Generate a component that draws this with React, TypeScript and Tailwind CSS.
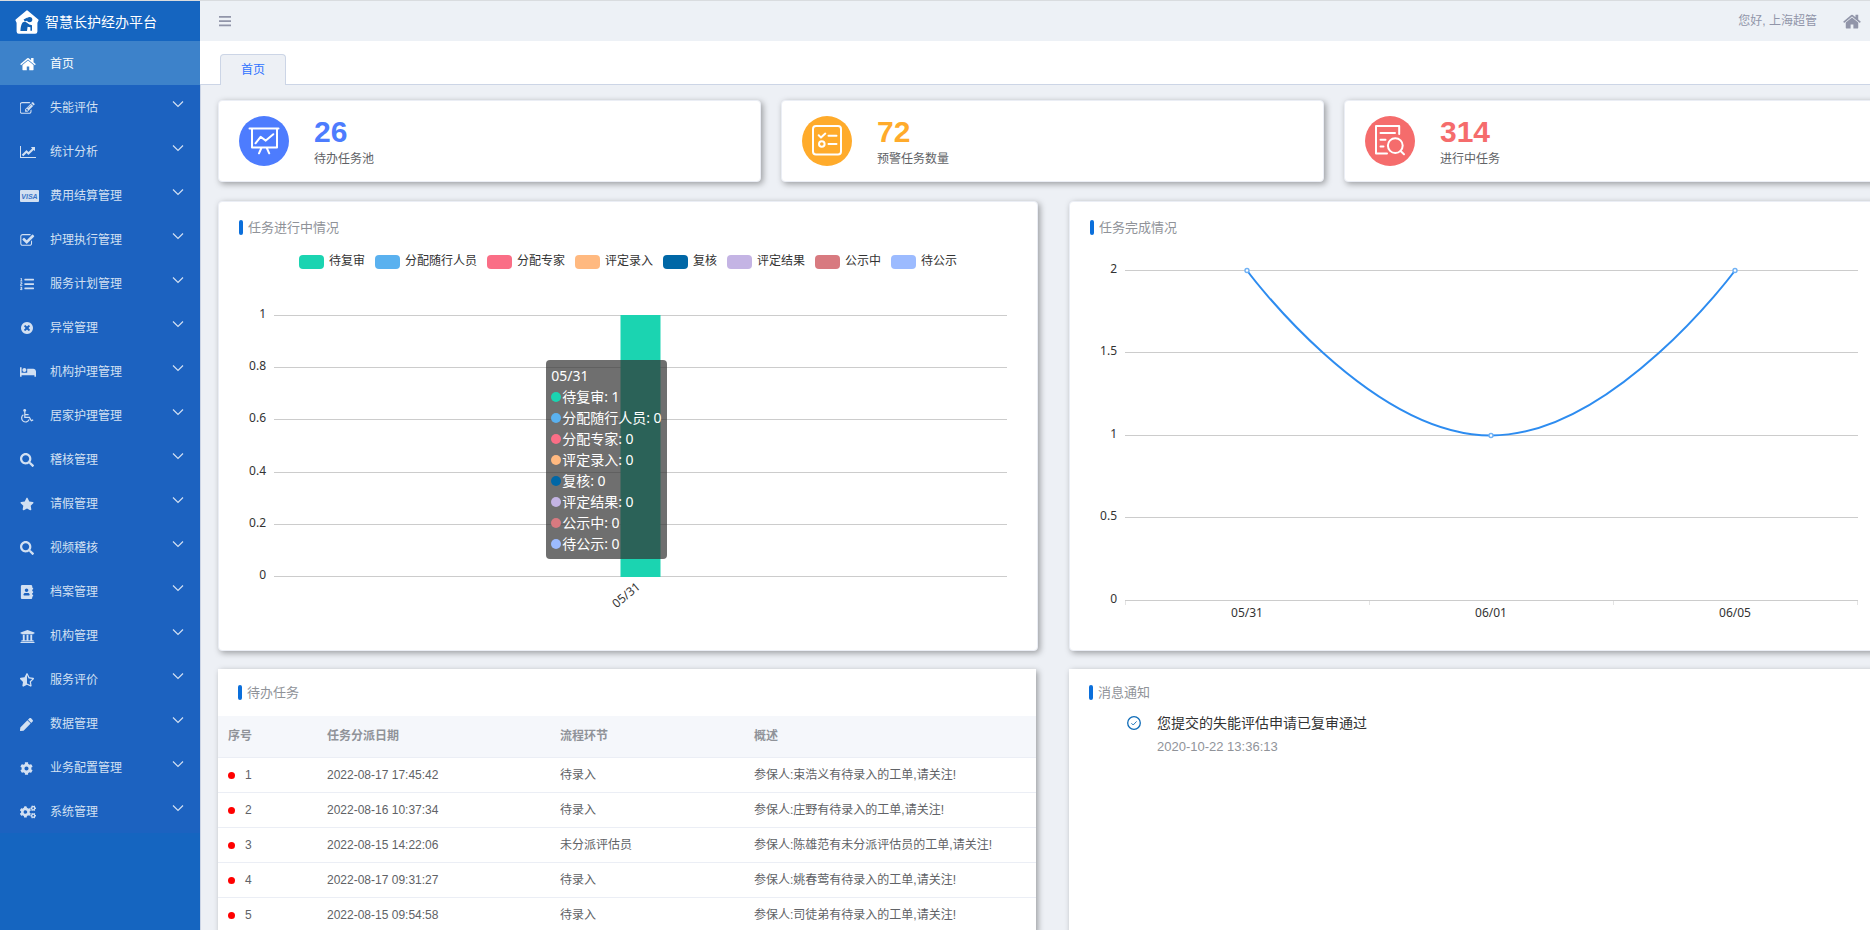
import React from 'react';
import {
  FaAddressBook,
  FaBed,
  FaCog,
  FaCogs,
  FaListOl,
  FaPen,
  FaSearch,
  FaStar,
  FaStarHalfAlt,
  FaUniversity,
} from 'react-icons/fa';

const HomeIcon = ({ className }: { className?: string }) => (
  <svg viewBox="64 200 1664 1370" className={className} fill="currentColor" aria-hidden="true">
    <path d="M1472 992v480q0 26-19 45t-45 19h-384v-384h-256v384h-384q-26 0-45-19t-19-45v-480q0-1 .5-3t.5-3l575-474 575 474q1 2 1 6zm223-69l-62 74q-8 9-21 11h-3q-13 0-21-7l-692-577-692 577q-12 8-24 7-13-2-21-11l-62-74q-8-10-7-23.5t11-21.5l719-599q32-26 76-26t76 26l244 204v-195q0-14 9-23t23-9h192q14 0 23 9t9 23v408l219 182q10 8 11 21.5t-7 23.5z" />
  </svg>
);

const EditIcon = () => (
  <svg viewBox="64 0 1728 1792" className="h-[15px] w-[15px]" fill="currentColor" aria-hidden="true">
    <path d="M888 1184l116-116-152-152-116 116v56h96v96h56zm440-720q-16-16-33 1l-350 350q-17 17-1 33t33-1l350-350q17-17 1-33zm80 594v190q0 119-84.5 203.5t-203.5 84.5h-832q-119 0-203.5-84.5t-84.5-203.5v-832q0-119 84.5-203.5t203.5-84.5h832q63 0 117 25 15 7 18 23 3 17-9 29l-49 49q-14 14-32 8-23-6-45-6h-832q-66 0-113 47t-47 113v832q0 66 47 113t113 47h832q66 0 113-47t47-113v-126q0-13 9-22l64-64q15-15 35-7t20 29zm-96-738l288 288-672 672h-288v-288zm444 132l-92 92-288-288 92-92q28-28 68-28t68 28l152 152q28 28 28 68t-28 68z" />
  </svg>
);

const LineChartIcon = () => (
  <svg viewBox="0 0 2048 1792" className="h-[14px] w-[16px]" fill="currentColor" aria-hidden="true">
    <path d="M2048 1536v128h-2048v-1536h128v1408h1920zm-128-1248v435q0 21-19.5 29.5t-35.5-7.5l-121-121-633 633q-10 10-23 10t-23-10l-233-233-416 416-192-192 585-585q10-10 23-10t23 10l233 233 464-464-121-121q-16-16-7.5-35.5t29.5-19.5h435q14 0 23 9t9 23z" />
  </svg>
);

const VisaIcon = () => (
  <svg viewBox="0 0 19 12" className="h-3 w-[19px]" aria-hidden="true">
    <rect width="19" height="12" rx="1" fill="currentColor" />
    <text x="9.5" y="8.6" textAnchor="middle" fontSize="7" fontStyle="italic" fontWeight="bold" fill="#3a74c6">
      VISA
    </text>
  </svg>
);

const CheckSquareIcon = () => (
  <svg viewBox="64 0 1728 1792" className="h-[15px] w-[15px]" fill="currentColor" aria-hidden="true">
    <path d="M1472 930v318q0 119-84.5 203.5t-203.5 84.5h-832q-119 0-203.5-84.5t-84.5-203.5v-832q0-119 84.5-203.5t203.5-84.5h832q63 0 117 25 15 7 18 23 3 17-9 29l-49 49q-10 10-23 10-3 0-9-2-23-6-45-6h-832q-66 0-113 47t-47 113v832q0 66 47 113t113 47h832q66 0 113-47t47-113v-254q0-13 9-22l64-64q10-10 23-10 6 0 12 3 20 8 20 29zm231-489l-814 814q-24 24-57 24t-57-24l-430-430q-24-24-24-57t24-57l110-110q24-24 57-24t57 24l263 263 647-647q24-24 57-24t57 24l110 110q24 24 24 57t-24 57z" />
  </svg>
);

const TimesCircleIcon = () => (
  <svg viewBox="0 0 1792 1792" className="h-[14px] w-[14px]" fill="currentColor" aria-hidden="true">
    <path d="M1277 1122q0-26-19-45l-181-181 181-181q19-19 19-45 0-27-19-46l-90-90q-19-19-46-19-26 0-45 19l-181 181-181-181q-19-19-45-19-27 0-46 19l-90 90q-19 19-19 46 0 26 19 45l181 181-181 181q-19 19-19 45 0 27 19 46l90 90q19 19 46 19 26 0 45-19l181-181 181 181q19 19 45 19 27 0 46-19l90-90q19-19 19-46zm387-226q0 209-103 385.5t-279.5 279.5-385.5 103-385.5-103-279.5-279.5-103-385.5 103-385.5 279.5-279.5 385.5-103 385.5 103 279.5 279.5 103 385.5z" />
  </svg>
);

const WheelchairIcon = () => (
  <svg viewBox="0 0 14 14" className="h-[14px] w-[14px]" fill="none" stroke="currentColor" strokeWidth="1.2" aria-hidden="true">
    <circle cx="4.7" cy="1.5" r="1.4" fill="currentColor" stroke="none" />
    <path d="M4.8 2.8V8.4H9.4L11.3 11.8 13.2 10.9M4.8 5.6H8.6" />
    <path d="M3.4 5.8A3.9 3.9 0 1 0 9.2 10.4" />
  </svg>
);

const Logo = () => (
  <svg viewBox="0 0 24 24" className="h-6 w-6 shrink-0" aria-hidden="true">
    <path
      d="M12 1.2 22.8 10.2 21.6 12.6V21.6Q21.6 23 20.2 23H3.8Q2.4 23 2.4 21.6V12.6L1.2 10.2Z"
      fill="#fff"
      stroke="#fff"
      strokeWidth="1.6"
      strokeLinejoin="round"
    />
    <circle cx="14.6" cy="9.6" r="2.7" fill="#1060b4" />
    <path d="M12.4 7.6 8.6 9.4 9.8 11.6 12.6 10.6Z" fill="#1060b4" />
    <path d="M7.6 12.4Q9.6 11 11.6 12.4L14.4 14.6 17 15.2V20.8H15.4V17.2L12.6 16.8 12 21H5.4Q5.6 15 7.6 12.4Z" fill="#1060b4" />
  </svg>
);

const menu = [
  { label: '失能评估', icon: <EditIcon /> },
  { label: '统计分析', icon: <LineChartIcon /> },
  { label: '费用结算管理', icon: <VisaIcon /> },
  { label: '护理执行管理', icon: <CheckSquareIcon /> },
  { label: '服务计划管理', icon: <FaListOl size={14} /> },
  { label: '异常管理', icon: <TimesCircleIcon /> },
  { label: '机构护理管理', icon: <FaBed size={16} /> },
  { label: '居家护理管理', icon: <WheelchairIcon /> },
  { label: '稽核管理', icon: <FaSearch size={14} /> },
  { label: '请假管理', icon: <FaStar size={14} /> },
  { label: '视频稽核', icon: <FaSearch size={14} /> },
  { label: '档案管理', icon: <FaAddressBook size={14} /> },
  { label: '机构管理', icon: <FaUniversity size={15} /> },
  { label: '服务评价', icon: <FaStarHalfAlt size={14} /> },
  { label: '数据管理', icon: <FaPen size={13} /> },
  { label: '业务配置管理', icon: <FaCog size={13} /> },
  { label: '系统管理', icon: <FaCogs size={16} /> },
];

const series = [
  { name: '待复审', value: 1, color: 'bg-[#1bd4b1]' },
  { name: '分配随行人员', value: 0, color: 'bg-[#5ab1ef]' },
  { name: '分配专家', value: 0, color: 'bg-[#fa6e86]' },
  { name: '评定录入', value: 0, color: 'bg-[#ffb980]' },
  { name: '复核', value: 0, color: 'bg-[#0067a6]' },
  { name: '评定结果', value: 0, color: 'bg-[#c4b4e4]' },
  { name: '公示中', value: 0, color: 'bg-[#d87a80]' },
  { name: '待公示', value: 0, color: 'bg-[#9cbbff]' },
];

const tasks = [
  { id: 1, date: '2022-08-17 17:45:42', step: '待录入', note: '参保人:束浩义有待录入的工单,请关注!' },
  { id: 2, date: '2022-08-16 10:37:34', step: '待录入', note: '参保人:庄野有待录入的工单,请关注!' },
  { id: 3, date: '2022-08-15 14:22:06', step: '未分派评估员', note: '参保人:陈雄范有未分派评估员的工单,请关注!' },
  { id: 4, date: '2022-08-17 09:31:27', step: '待录入', note: '参保人:姚春莺有待录入的工单,请关注!' },
  { id: 5, date: '2022-08-15 09:54:58', step: '待录入', note: '参保人:司徒弟有待录入的工单,请关注!' },
];

interface StatCardProps {
  value: number;
  label: string;
  bg: string;
  color: string;
  children: React.ReactNode;
}

const StatCard: React.FC<StatCardProps> = ({ value, label, bg, color, children }) => (
  <div className="flex h-[82px] items-center gap-[25px] rounded border border-[#ebeef5] bg-white px-5 shadow-[2px_2px_6px_rgba(0,0,0,0.35)]">
    <div className={`h-[50px] w-[50px] shrink-0 rounded-full ${bg}`}>
      <svg
        viewBox="0 0 50 50"
        fill="none"
        stroke="#fff"
        strokeWidth="2"
        strokeLinecap="round"
        strokeLinejoin="round"
        aria-hidden="true"
      >
        {children}
      </svg>
    </div>
    <div className="pt-1">
      <p className={`text-[30px] leading-8 font-bold ${color}`}>{value}</p>
      <p className="text-xs leading-[22px] text-[#606266]">{label}</p>
    </div>
  </div>
);

const PanelTitle = ({ children }: { children: React.ReactNode }) => (
  <div className="flex h-[47px] items-center gap-[5px] px-5">
    <span className="h-[15px] w-1 rounded-sm bg-[#0b6fdb]" />
    <h2 className="text-[13px] leading-5 text-[#909399]">{children}</h2>
  </div>
);

const chartFont = "font-['Noto_Sans','Noto_Sans_CJK_SC',sans-serif]";

const barGrid = [
  { label: '1', y: 43 },
  { label: '0.8', y: 95 },
  { label: '0.6', y: 147 },
  { label: '0.4', y: 200 },
  { label: '0.2', y: 252 },
  { label: '0', y: 304 },
];

const BarChart = () => (
  <div className={`relative ${chartFont}`}>
    <ul className="flex h-5 flex-wrap items-center justify-center gap-[10px]">
      {series.map((s) => (
        <li key={s.name} className="flex items-center gap-[5px] text-xs text-[#333]">
          <span className={`h-[14px] w-[25px] rounded ${s.color}`} />
          <span className="pb-0.5 leading-[18px]">{s.name}</span>
        </li>
      ))}
    </ul>
    <svg viewBox="0 0 818 378" className="block w-full" role="img" aria-label="任务进行中情况">
      {barGrid.map((g) => (
        <g key={g.label}>
          <rect x="55" y={g.y} width="733" height="1" fill="#ccc" shapeRendering="crispEdges" />
          <text x="47" y={g.y + 3} textAnchor="end" fontSize="12" fill="#333">
            {g.label}
          </text>
        </g>
      ))}
      <rect x="401.5" y="43" width="40" height="262" fill="#1bd4b1" />
      <text x="422" y="316" textAnchor="end" fontSize="12" fill="#333" transform="rotate(-40 422 316)">
        05/31
      </text>
    </svg>
    <div className="absolute top-[108px] left-[40%] rounded bg-[#323232]/70 p-[5px] text-sm leading-[21px] whitespace-nowrap text-white">
      <p>05/31</p>
      {series.map((s) => (
        <p key={s.name} className="flex items-center gap-px">
          <span className={`h-[10px] w-[10px] rounded-full ${s.color}`} />
          {s.name}: {s.value}
        </p>
      ))}
    </div>
  </div>
);

const lineGrid = [
  { label: '2', y: 18 },
  { label: '1.5', y: 100 },
  { label: '1', y: 183 },
  { label: '0.5', y: 265 },
  { label: '0', y: 348 },
];

const linePoints = [
  { label: '05/31', x: 177, y: 18.5 },
  { label: '06/01', x: 421, y: 183.5 },
  { label: '06/05', x: 665, y: 18.5 },
];

const LineChart = () => (
  <svg viewBox="0 0 818 398" className={`block w-full ${chartFont}`} role="img" aria-label="任务完成情况">
    {lineGrid.map((g) => (
      <g key={g.label}>
        <rect x="55" y={g.y} width="733" height="1" fill="#ccc" shapeRendering="crispEdges" />
        <text x="47" y={g.y + 3} textAnchor="end" fontSize="12" fill="#333">
          {g.label}
        </text>
      </g>
    ))}
    {[55, 299, 543, 787].map((x) => (
      <rect key={x} x={x} y="349" width="1" height="4" fill="#e4e4e4" />
    ))}
    <path
      d="M177 18.5C177 18.5 299 183.5 421 183.5C543 183.5 665 18.5 665 18.5"
      fill="none"
      stroke="#2d8cf0"
      strokeWidth="2"
    />
    {linePoints.map((p) => (
      <g key={p.label}>
        <circle cx={p.x} cy={p.y} r="2" fill="#fff" stroke="#6fb1f5" strokeWidth="1.4" />
        <text x={p.x} y="365" textAnchor="middle" fontSize="12" fill="#333">
          {p.label}
        </text>
      </g>
    ))}
  </svg>
);

const Sidebar = () => (
  <aside className="w-[200px] shrink-0 bg-[#1565c0] text-white">
    <div className="flex h-10 items-center gap-[6px] pt-0.5 pl-[15px]">
      <Logo />
      <h1 className="text-sm leading-5">智慧长护经办平台</h1>
    </div>
    <nav className="bg-[#1c62c0] text-xs">
      <a href="#" className="flex h-11 items-center bg-[#3d82ca] pt-0.5 pl-5">
        <span className="w-[30px]">
          <HomeIcon className="h-[14px] w-4" />
        </span>
        首页
      </a>
      {menu.map((item) => (
        <a key={item.label} href="#" className="flex h-11 items-center pt-0.5 pr-4 pl-5 text-[#d2e0f2]">
          <span className="w-[30px]">{item.icon}</span>
          <span className="flex-1">{item.label}</span>
          <svg viewBox="0 0 12 12" className="mb-[9px] h-3 w-3" fill="none" stroke="currentColor" strokeWidth="1.2" aria-hidden="true">
            <path d="M1 3.5 6 8.5 11 3.5" />
          </svg>
        </a>
      ))}
    </nav>
  </aside>
);

const panel = 'rounded border border-[#ebeef5] bg-white shadow-[2px_2px_6px_rgba(0,0,0,0.35)]';

export default function App() {
  return (
    <div className="flex h-screen overflow-hidden border-t border-[#d9dcdf] bg-[#edf0f5] font-['Liberation_Sans','Noto_Sans_CJK_SC',sans-serif]">
      <Sidebar />
      <div className="flex min-w-0 flex-1 flex-col">
        <header className="flex h-10 shrink-0 items-center justify-between bg-[#edf1f6] pr-[9px] pl-[19px] text-[#9195a9]">
          <button type="button" aria-label="折叠菜单">
            <svg viewBox="0 0 12 12" className="h-3 w-3" fill="currentColor">
              <path d="M0 1h12v1.8H0zM0 5.2h12V7H0zM0 9.4h12v1.8H0z" />
            </svg>
          </button>
          <div className="flex items-center gap-[26px] text-xs">
            <span>您好, 上海超管</span>
            <a href="#" aria-label="首页">
              <HomeIcon className="h-[15px] w-[18px]" />
            </a>
          </div>
        </header>
        <div className="flex h-11 shrink-0 items-end border-b border-[#ccd5e6] bg-white pl-5">
          <a
            href="#"
            className="-mb-px flex h-[31px] w-[66px] items-center justify-center rounded-t-sm border border-b-0 border-[#ccd5e6] bg-[#edf0f5] text-xs text-[#2d72ff]"
          >
            首页
          </a>
        </div>
        <main className="min-h-0 flex-1 overflow-hidden border-l border-[#ccd5e6] pt-[15px]">
          {/* rows run past the right edge by about the width of the left margin */}
          <div className="mr-[-19px] ml-[17px]">
            <div className="mr-0.5 grid grid-cols-3 gap-5">
              <StatCard value={26} label="待办任务池" bg="bg-[#4d7cfe]" color="text-[#4d7cfe]">
                <path d="M10.5 12.6H39.5M13 13V31.5H38V13M16.5 27.3 21.6 20.8 26.8 24.6 34.3 18.2M22.4 32 20 37.3M27.8 32 30.2 37.3" />
              </StatCard>
              <StatCard value={72} label="预警任务数量" bg="bg-[#ffab2b]" color="text-[#ffab2b]">
                <rect x="11" y="10" width="28" height="28.5" rx="3" />
                <path d="M16.7 19.3 19 21.6 23.3 17.6M26.5 19.8H34.5M26.5 28H34.5" />
                <circle cx="19.8" cy="28" r="2.8" />
              </StatCard>
              <StatCard value={314} label="进行中任务" bg="bg-[#f56c6c]" color="text-[#f56c6c]">
                <path d="M34.2 18V10H11V37.6H22M15.5 17H30M15.5 23.8H20.5M15.5 30.4H18.5M35.6 35 39 38.2" />
                <circle cx="30.3" cy="29.6" r="7.4" />
              </StatCard>
            </div>

            <div className="mt-[19px] grid grid-cols-2 gap-[31px]">
              <section className={`${panel} pt-0.5`}>
                <PanelTitle>任务进行中情况</PanelTitle>
                <div className="pt-px">
                  <BarChart />
                </div>
              </section>
              <section className={`${panel} pt-0.5`}>
                <PanelTitle>任务完成情况</PanelTitle>
                <div className="pt-px">
                  <LineChart />
                </div>
              </section>
            </div>

            <div className="mt-[18px] mr-0.5 grid grid-cols-2 gap-[33px]">
              <section className="bg-white shadow-[2px_2px_6px_rgba(0,0,0,0.35)]">
                <PanelTitle>待办任务</PanelTitle>
                <table className="w-full table-fixed text-left text-xs text-[#606266]">
                  <thead className="bg-[#f5f7fb] text-[#909399]">
                    <tr className="h-[41px] border-b border-[#ebeef5]">
                      <th className="w-[99px] px-[10px]">序号</th>
                      <th className="w-[233px] px-[10px]">任务分派日期</th>
                      <th className="w-[194px] px-[10px]">流程环节</th>
                      <th className="px-[10px]">概述</th>
                    </tr>
                  </thead>
                  <tbody>
                    {tasks.map((t) => (
                      <tr key={t.id} className="h-[35px] border-b border-[#ebeef5]">
                        <td className="px-[10px]">
                          <span className="mr-[10px] inline-block h-[7px] w-[7px] rounded-full bg-[#f00]" />
                          {t.id}
                        </td>
                        <td className="px-[10px]">{t.date}</td>
                        <td className="px-[10px]">{t.step}</td>
                        <td className="px-[10px]">{t.note}</td>
                      </tr>
                    ))}
                  </tbody>
                </table>
              </section>
              <section className="bg-white shadow-[2px_2px_6px_rgba(0,0,0,0.35)]">
                <PanelTitle>消息通知</PanelTitle>
                <ul className="pl-[58px]">
                  <li className="flex gap-4">
                    <svg viewBox="0 0 14 14" className="h-[14px] w-[14px]" fill="none" stroke="#0f6cb8" aria-hidden="true">
                      <circle cx="7" cy="7" r="6.3" strokeWidth="1.3" />
                      <path d="M4.4 7.2 6.2 9 9.6 5.4" strokeWidth="0.9" />
                    </svg>
                    <div>
                      <p className="text-sm leading-[14px] text-[#333]">您提交的失能评估申请已复审通过</p>
                      <p className="mt-2 text-[13px] leading-[18px] text-[#909399]">2020-10-22 13:36:13</p>
                    </div>
                  </li>
                </ul>
              </section>
            </div>
          </div>
        </main>
      </div>
    </div>
  );
}
